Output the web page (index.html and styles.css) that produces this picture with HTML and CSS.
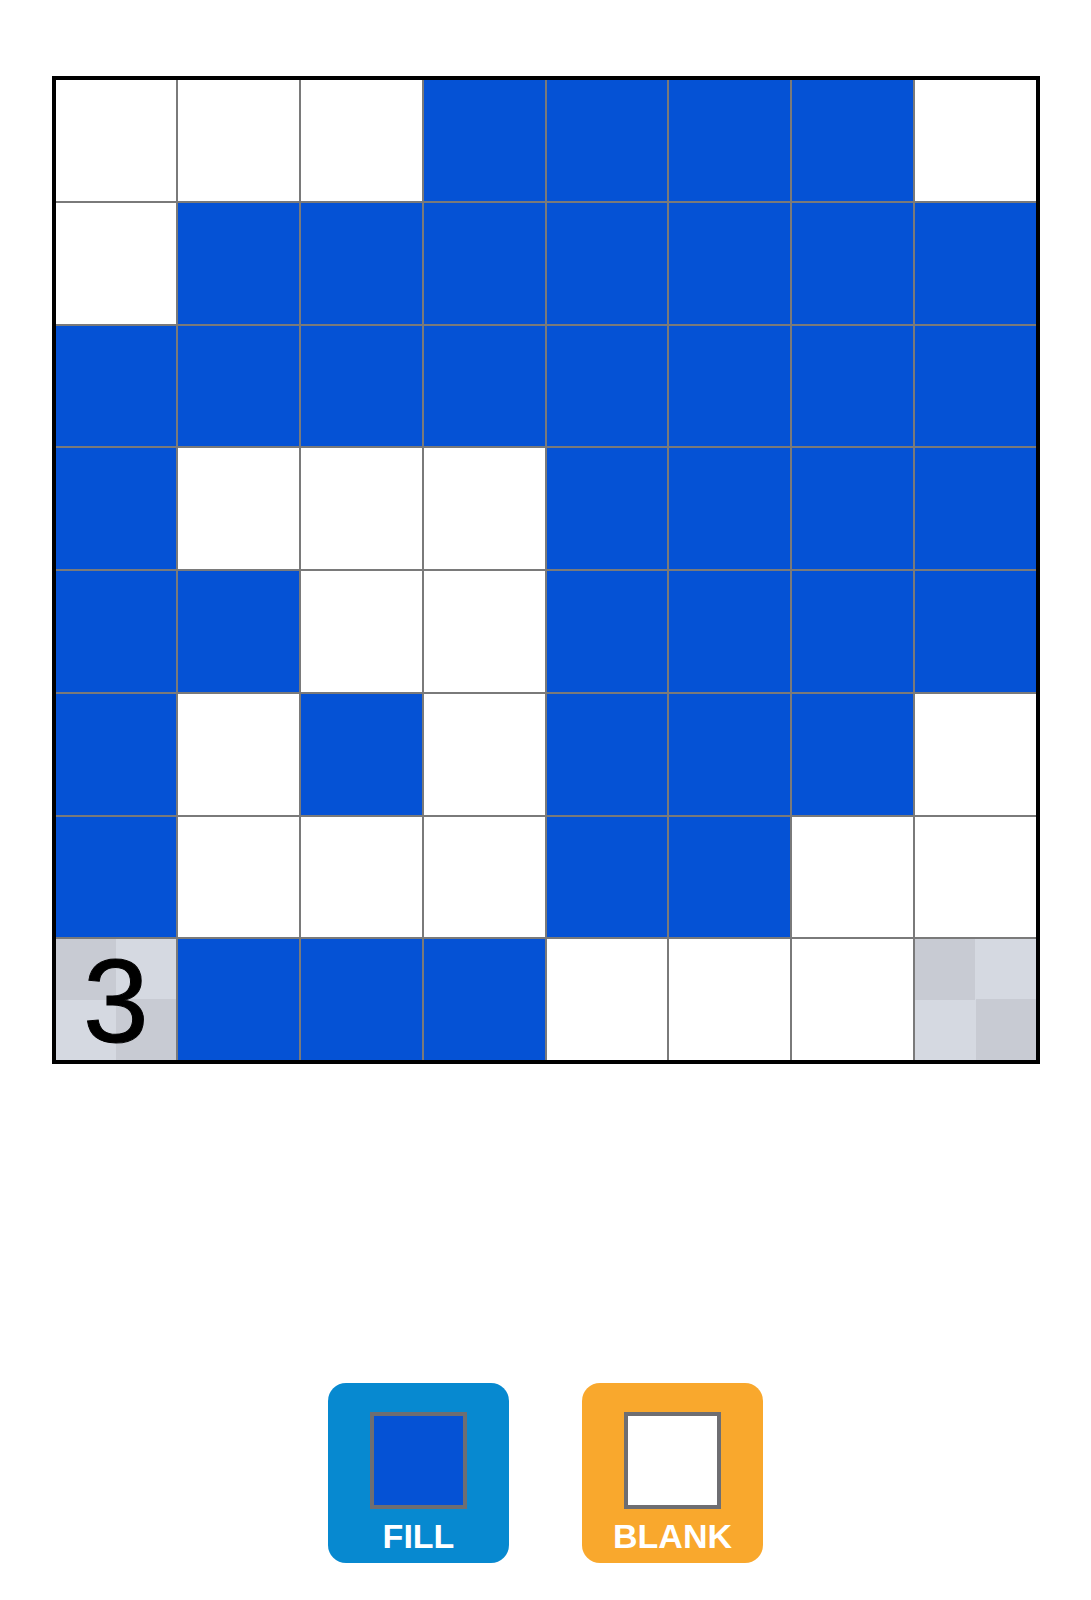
FILE: index.html
```html
<!DOCTYPE html>
<html>
<head>
<meta charset="utf-8">
<link rel="stylesheet" href="styles.css">
</head>
<body>
<div class="page">
  <div class="board">
    <div class="c w"></div><div class="c w"></div><div class="c w"></div><div class="c b"></div><div class="c b"></div><div class="c b"></div><div class="c b"></div><div class="c w"></div>
    <div class="c w"></div><div class="c b"></div><div class="c b"></div><div class="c b"></div><div class="c b"></div><div class="c b"></div><div class="c b"></div><div class="c b"></div>
    <div class="c b"></div><div class="c b"></div><div class="c b"></div><div class="c b"></div><div class="c b"></div><div class="c b"></div><div class="c b"></div><div class="c b"></div>
    <div class="c b"></div><div class="c w"></div><div class="c w"></div><div class="c w"></div><div class="c b"></div><div class="c b"></div><div class="c b"></div><div class="c b"></div>
    <div class="c b"></div><div class="c b"></div><div class="c w"></div><div class="c w"></div><div class="c b"></div><div class="c b"></div><div class="c b"></div><div class="c b"></div>
    <div class="c b"></div><div class="c w"></div><div class="c b"></div><div class="c w"></div><div class="c b"></div><div class="c b"></div><div class="c b"></div><div class="c w"></div>
    <div class="c b"></div><div class="c w"></div><div class="c w"></div><div class="c w"></div><div class="c b"></div><div class="c b"></div><div class="c w"></div><div class="c w"></div>
    <div class="c g"><span class="num">3</span></div><div class="c b"></div><div class="c b"></div><div class="c b"></div><div class="c w"></div><div class="c w"></div><div class="c w"></div><div class="c g"></div>
  </div>
  <div class="controls">
    <div class="btn btn-fill">
      <div class="swatch swatch-fill"></div>
      <div class="label">FILL</div>
    </div>
    <div class="btn btn-blank">
      <div class="swatch swatch-blank"></div>
      <div class="label">BLANK</div>
    </div>
  </div>
</div>
</body>
</html>
```

FILE: styles.css
```css
html, body {
  margin: 0;
  padding: 0;
  background: #ffffff;
}

.page {
  width: 1091px;
  padding-top: 76px;
  display: flex;
  flex-direction: column;
  align-items: center;
  font-family: "Liberation Sans", Arial, sans-serif;
}

.board {
  box-sizing: border-box;
  width: 988px;
  height: 988px;
  border: 4px solid #000000;
  background: #7a7a7a;
  display: grid;
  grid-template-columns: repeat(8, 1fr);
  grid-template-rows: repeat(8, 1fr);
  gap: 2px;
}

.c {
  display: flex;
  align-items: center;
  justify-content: center;
}

.w { background: #ffffff; }
.b { background: #0552d5; }
.g {
  background: conic-gradient(#d5d9e1 0 25%, #c8cbd3 0 50%, #d5d9e1 0 75%, #c8cbd3 0);
}

.num {
  font-size: 118px;
  line-height: 1;
  color: #000000;
  margin-top: 2px;
  -webkit-text-stroke: 1px #000000;
}

.controls {
  margin-top: 319px;
  display: flex;
  gap: 73px;
}

.btn {
  box-sizing: border-box;
  width: 181px;
  height: 180px;
  border-radius: 18px;
  padding-top: 29px;
  display: flex;
  flex-direction: column;
  align-items: center;
}

.btn-fill { background: #0789d0; }
.btn-blank { background: #f9a82d; }

.swatch {
  box-sizing: border-box;
  width: 97px;
  height: 97px;
  border: 4px solid #6e6e72;
}

.swatch-fill { background: #0552d5; }
.swatch-blank { background: #ffffff; }

.label {
  margin-top: 10px;
  font-size: 34px;
  line-height: 34px;
  font-weight: bold;
  color: #ffffff;
}
```
